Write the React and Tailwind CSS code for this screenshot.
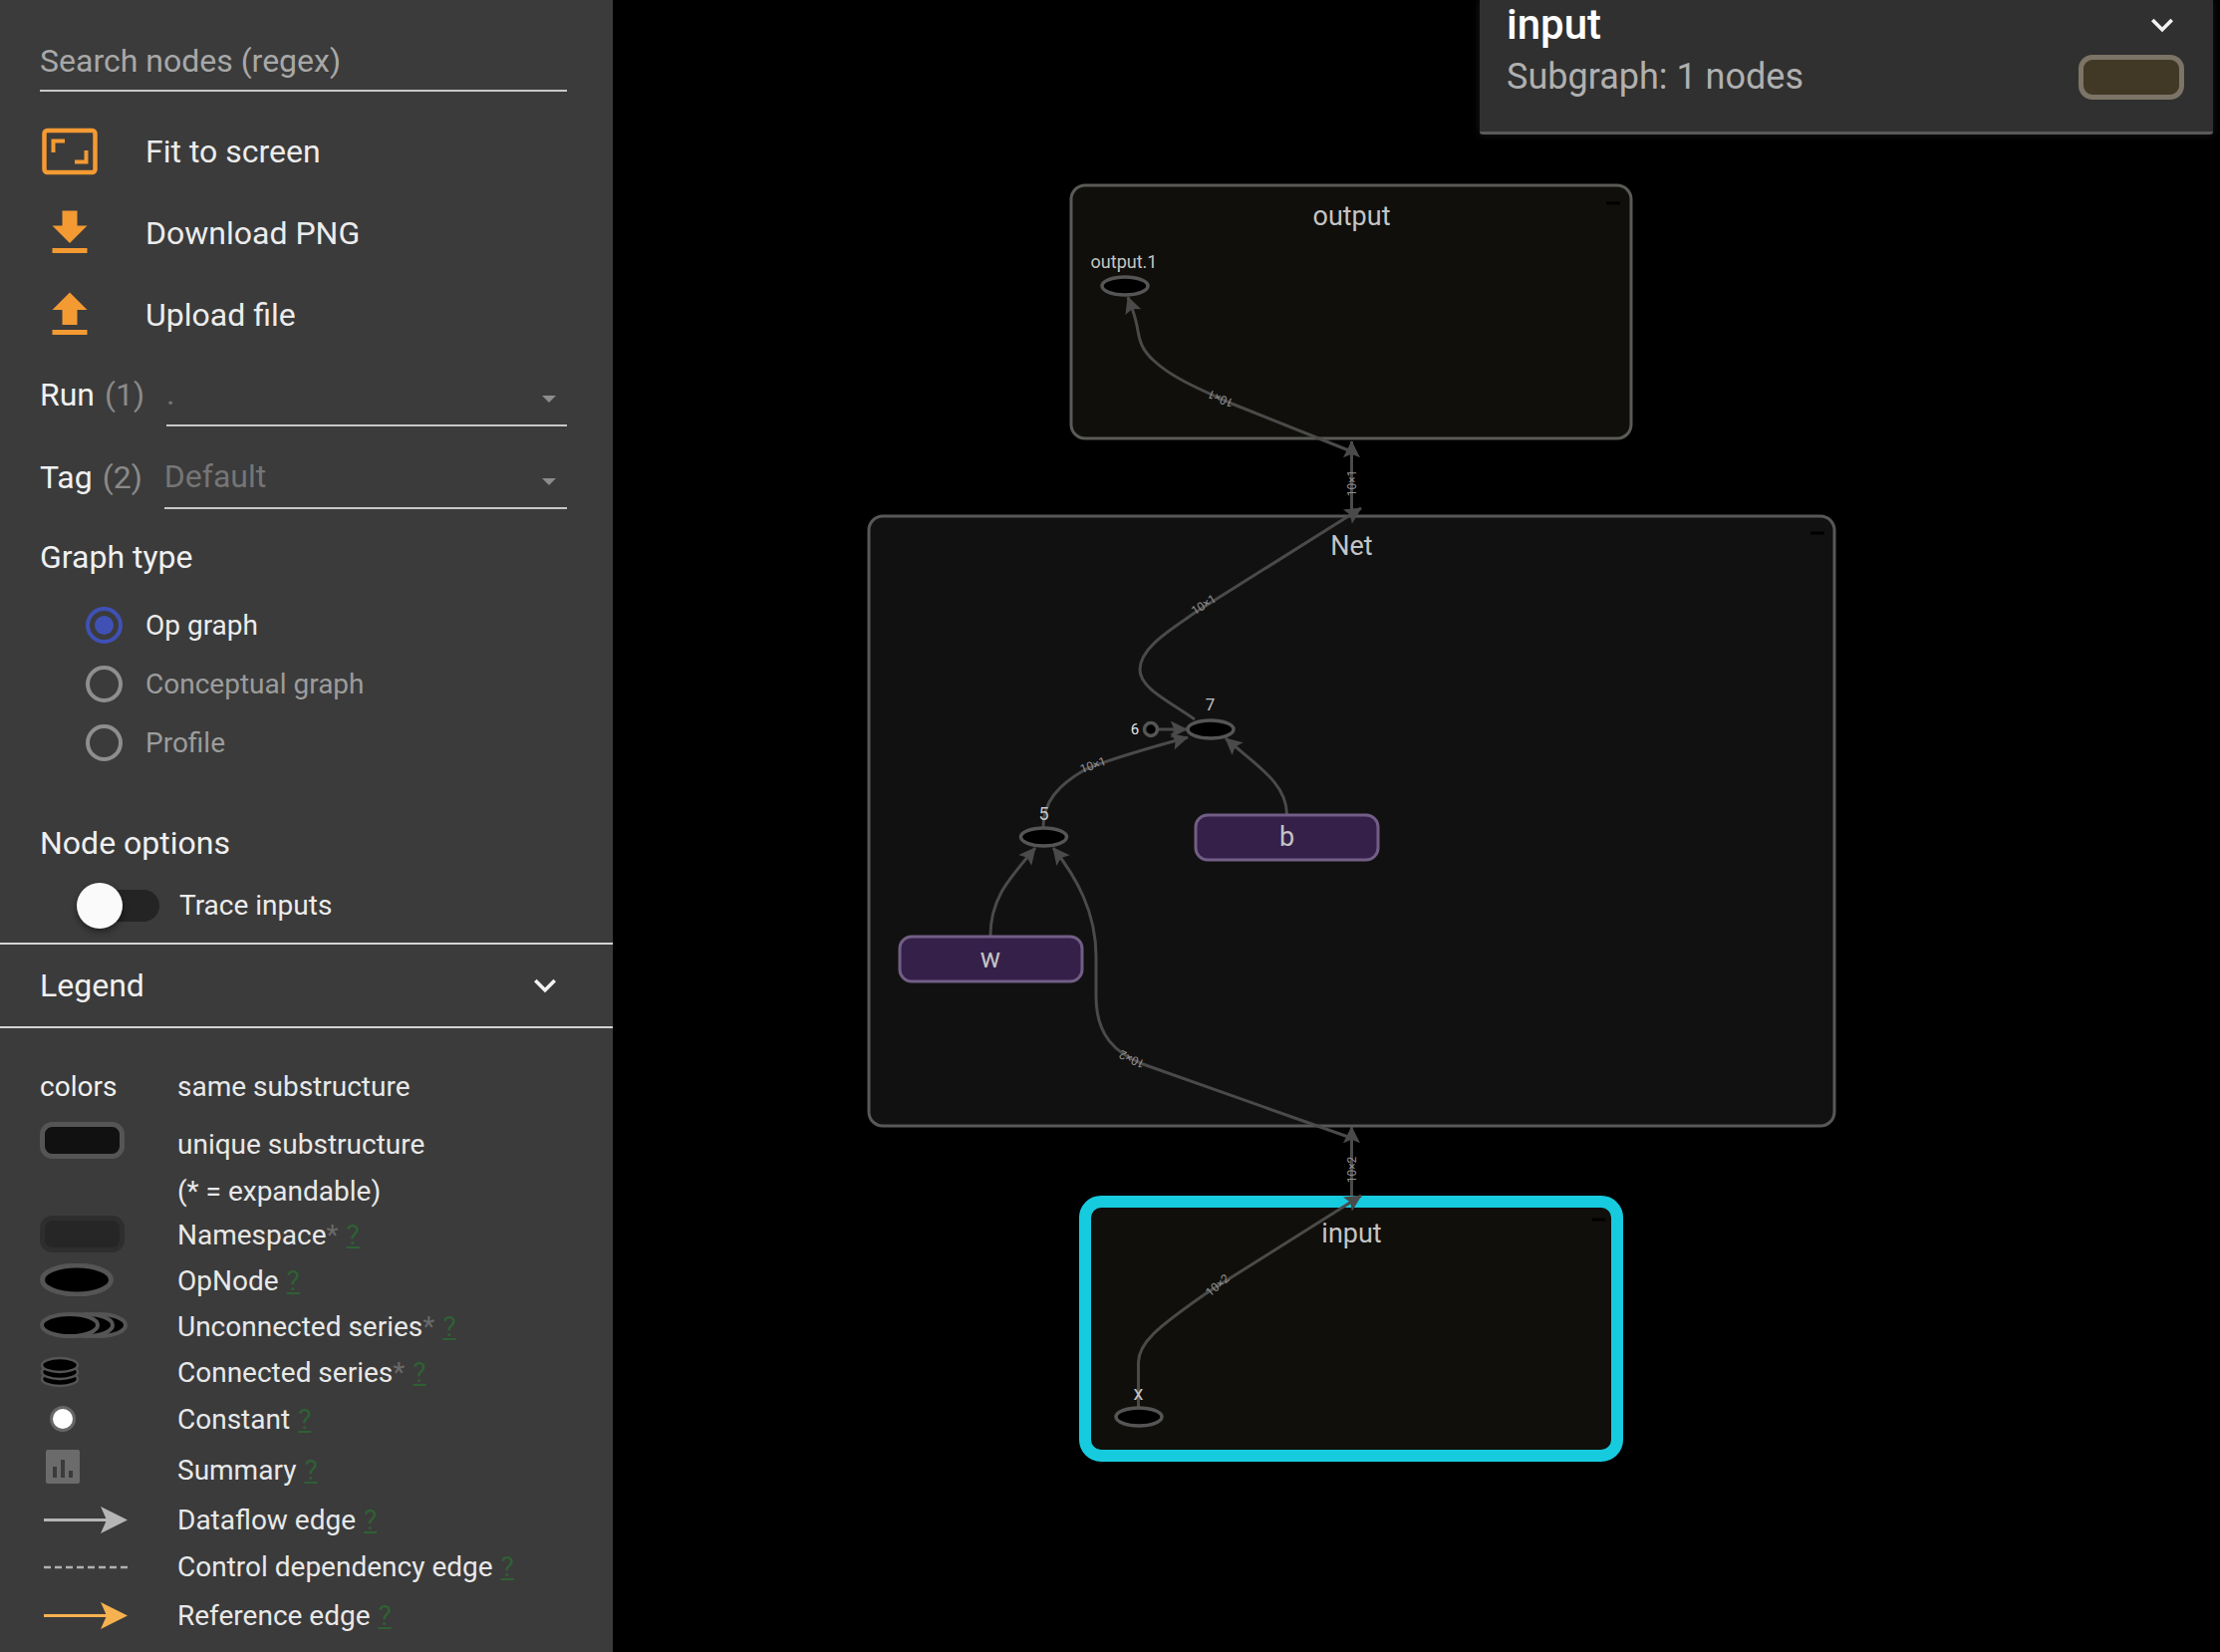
import React from 'react';

const Question = () => <span className="ml-[8px] text-[#2f6034] underline">?</span>;
const Star = () => <span className="text-[#6a6a6a]">*</span>;

const SelectArrow = () => (
  <svg width="14" height="7" viewBox="0 0 14 7" className="mr-[11px] mt-[12px]">
    <path d="M0 0h14L7 7z" fill="#8c8c8c" />
  </svg>
);

const Chevron = ({ size = 44 }) => (
  <svg width={size} height={size} viewBox="0 0 24 24" fill="#f2f2f2">
    <path d="M16.59 8.59L12 13.17 7.41 8.59 6 10l6 6 6-6z" />
  </svg>
);

const ActionRow = ({ label, children }) => (
  <div className="h-[82px] flex items-center pl-10">
    <div className="w-[60px] h-[60px] mr-[46px] flex items-center justify-center">{children}</div>
    <span className="text-[32px] text-[#ececec]">{label}</span>
  </div>
);

const SelectRow = ({ label, count, value, height }) => (
  <div className={`${height} flex items-end pl-10 pr-[46px]`}>
    <div className="h-[65px] flex items-center text-[32px] text-[#f0f0f0] whitespace-nowrap">
      {label}
      <span className="ml-[10px] text-[#8a8a8a]">({count})</span>
    </div>
    <div className="flex-1 ml-[22px] h-[65px] border-b-2 border-[#c8c8c8] flex items-center justify-between text-[32px] text-[#757575]">
      <span>{value}</span>
      <SelectArrow />
    </div>
  </div>
);

const Radio = ({ label, checked }) => (
  <div className="h-[59px] flex items-center pl-[86px]">
    <div className={`w-[37px] h-[37px] rounded-full border-4 flex items-center justify-center ${checked ? 'border-[#3f51b5]' : 'border-[#8e8e8e]'}`}>
      {checked && <div className="w-[19px] h-[19px] rounded-full bg-[#3f51b5]" />}
    </div>
    <span className={`ml-[23px] text-[28px] ${checked ? 'text-[#ececec]' : 'text-[#9c9c9c]'}`}>{label}</span>
  </div>
);

const legendRows = [
  { h: 'h-[60px]', text: 'same substructure', lead: <span className="text-[#f0f0f0]">colors</span> },
  {
    h: 'h-[56px]',
    text: 'unique substructure',
    lead: (
      <svg width="85" height="37" className="mb-[10px]">
        <rect x="2.5" y="2.5" width="80" height="32" rx="10" fill="#111111" stroke="#555555" strokeWidth="5" />
      </svg>
    ),
  },
  { h: 'h-[38px]', text: '(* = expandable)' },
  {
    h: 'h-[50px]',
    text: 'Namespace',
    star: true,
    help: true,
    lead: (
      <svg width="85" height="37" className="mb-[4px]">
        <rect x="2.5" y="2.5" width="80" height="32" rx="10" fill="#262626" stroke="#2e2e2e" strokeWidth="5" />
      </svg>
    ),
  },
  {
    h: 'h-[42px]',
    text: 'OpNode',
    help: true,
    lead: (
      <svg width="74" height="33" className="mb-[4px]">
        <ellipse cx="37" cy="16.5" rx="34.5" ry="14.5" fill="#000" stroke="#555555" strokeWidth="5" />
      </svg>
    ),
  },
  {
    h: 'h-[50px]',
    text: 'Unconnected series',
    star: true,
    help: true,
    lead: (
      <svg width="88" height="26" className="mb-[4px]">
        <ellipse cx="60" cy="13" rx="26" ry="11" fill="#000" stroke="#555555" strokeWidth="4" />
        <ellipse cx="47" cy="13" rx="26" ry="11" fill="#000" stroke="#555555" strokeWidth="4" />
        <ellipse cx="30" cy="13" rx="28" ry="11" fill="#000" stroke="#555555" strokeWidth="4" />
      </svg>
    ),
  },
  {
    h: 'h-[42px]',
    text: 'Connected series',
    star: true,
    help: true,
    lead: (
      <svg width="40" height="32" className="mb-[2px]">
        <ellipse cx="20" cy="23" rx="18" ry="7" fill="#000" stroke="#555555" strokeWidth="2.5" />
        <ellipse cx="20" cy="16" rx="18" ry="7" fill="#000" stroke="#555555" strokeWidth="2.5" />
        <ellipse cx="20" cy="9" rx="18" ry="7" fill="#000" stroke="#555555" strokeWidth="2.5" />
      </svg>
    ),
  },
  {
    h: 'h-[52px]',
    text: 'Constant',
    help: true,
    lead: (
      <svg width="26" height="26" className="ml-[10px] mb-[2px]">
        <circle cx="13" cy="13" r="11.5" fill="#fff" stroke="#666666" strokeWidth="3" />
      </svg>
    ),
  },
  {
    h: 'h-[49px]',
    text: 'Summary',
    help: true,
    lead: (
      <svg width="34" height="34" className="ml-[6px] mb-[8px]">
        <rect width="34" height="34" rx="2" fill="#6b6b6b" />
        <path d="M7 17h4v11H7zM15 10h4v18h-4zM23 21h4v7h-4z" fill="#3b3b3b" />
      </svg>
    ),
  },
  {
    h: 'h-[51px]',
    text: 'Dataflow edge',
    help: true,
    lead: (
      <svg width="84" height="27" className="ml-[4px]">
        <path d="M0 12h64v3H0z" fill="#b5b5b5" />
        <path d="M57 0l27 13.5L57 27l6-13.5z" fill="#b5b5b5" />
      </svg>
    ),
  },
  {
    h: 'h-[44px]',
    text: 'Control dependency edge',
    help: true,
    lead: (
      <svg width="84" height="4" className="ml-[4px]">
        <line x1="0" y1="2" x2="84" y2="2" stroke="#b0b0b0" strokeWidth="2.5" strokeDasharray="7 4" />
      </svg>
    ),
  },
  {
    h: 'h-[53px]',
    text: 'Reference edge',
    help: true,
    lead: (
      <svg width="84" height="27" className="ml-[4px]">
        <path d="M0 12h64v3H0z" fill="#f6b250" />
        <path d="M57 0l27 13.5L57 27l6-13.5z" fill="#f6b250" />
      </svg>
    ),
  },
];

const Sidebar = () => (
  <aside className="w-[615px] h-full shrink-0 bg-[#3b3b3b] flex flex-col">
    <div className="mx-10 w-[529px] h-[92px] border-b-2 border-[#c8c8c8] flex items-end pb-[5px] text-[32px] text-[#a8a8a8]">
      Search nodes (regex)
    </div>
    <div className="mt-[19px]">
      <ActionRow label="Fit to screen">
        <svg width="60" height="60" viewBox="0 0 60 60" fill="none" stroke="#f49a33">
          <rect x="4.5" y="9" width="51" height="42" rx="3" strokeWidth="4.5" />
          <path d="M25 19.5H13.5V31M35 40.5h11.5V29" strokeWidth="4" />
        </svg>
      </ActionRow>
      <ActionRow label="Download PNG">
        <svg width="60" height="60" viewBox="0 0 24 24" fill="#f49a33">
          <path d="M19 9h-4V3H9v6H5l7 7 7-7zM5 18v2h14v-2H5z" />
        </svg>
      </ActionRow>
      <ActionRow label="Upload file">
        <svg width="60" height="60" viewBox="0 0 24 24" fill="#f49a33">
          <path d="M9 16h6v-6h4l-7-7-7 7h4zm-4 2h14v2H5z" />
        </svg>
      </ActionRow>
    </div>
    <SelectRow label="Run" count="1" value="." height="h-[71px]" />
    <SelectRow label="Tag" count="2" value="Default" height="h-[83px]" />

    <div className="mt-[28px] h-[40px] pl-10 flex items-center text-[32px] text-[#f0f0f0]">Graph type</div>
    <div className="mt-[19px]">
      <Radio label="Op graph" checked />
      <Radio label="Conceptual graph" />
      <Radio label="Profile" />
    </div>

    <div className="mt-[51px] h-[40px] pl-10 flex items-center text-[32px] text-[#f0f0f0]">Node options</div>
    <div className="h-[80px] flex items-center pl-[77px] pt-[5px]">
      <div className="relative w-[83px] h-[32px] flex justify-end">
        <div className="w-[75px] h-[32px] rounded-full bg-[#242424]" />
        <div className="absolute left-0 top-[-7px] w-[46px] h-[46px] rounded-full bg-[#fafafa] shadow-[0_3px_6px_rgba(0,0,0,0.45)]" />
      </div>
      <span className="ml-[20px] text-[28px] text-[#ececec]">Trace inputs</span>
    </div>

    <div className="h-[86px] border-y-2 border-[#d4d4d4] flex items-center justify-between pl-10 pr-[46px] text-[32px] text-[#f0f0f0]">
      Legend
      <Chevron />
    </div>

    <div className="mt-[29px] pl-10 text-[28px] text-[#e8e8e8]">
      {legendRows.map((row) => (
        <div key={row.text} className={`${row.h} flex items-center`}>
          <div className="w-[138px] flex items-center">{row.lead}</div>
          <span>
            {row.text}
            {row.star && <Star />}
            {row.help && <Question />}
          </span>
        </div>
      ))}
    </div>
  </aside>
);

const Edge = ({ d }) => <path d={d} fill="none" stroke="#4a4a4a" strokeWidth="3" markerEnd="url(#edge-arrow)" />;

const EdgeLabel = ({ x, y, angle, children }) => (
  <text x={x} y={y} transform={`rotate(${angle} ${x} ${y})`} textAnchor="middle" dominantBaseline="central" fontSize="12" fill="#8e8e8e">
    {children}
  </text>
);

const NodeLabel = ({ x, y, size = 27, fill = '#c4c4c4', children }) => (
  <text x={x} y={y} textAnchor="middle" dominantBaseline="central" fontSize={size} fill={fill}>
    {children}
  </text>
);

const OpEllipse = ({ cx, cy }) => <ellipse cx={cx} cy={cy} rx="23" ry="9" fill="#000" stroke="#555555" strokeWidth="3.5" />;

const Graph = () => (
  <svg width="1613" height="1658" viewBox="615 0 1613 1658" className="block shrink-0">
    <defs>
      <marker id="edge-arrow" viewBox="0 0 10 10" refX="9.5" refY="5" markerWidth="18" markerHeight="17" markerUnits="userSpaceOnUse" orient="auto">
        <path d="M0 0L10 5L0 10L2 5z" fill="#4a4a4a" />
      </marker>
    </defs>

    {/* output */}
    <rect x="1075" y="186" width="562" height="254" rx="14" fill="#100f0b" stroke="#5a5a56" strokeWidth="3" />
    <NodeLabel x="1356.5" y="217">output</NodeLabel>
    <path d="M1612 204h14" stroke="#000" strokeWidth="3" />
    <NodeLabel x="1128" y="262" size="18">output.1</NodeLabel>
    <OpEllipse cx="1129" cy="287" />
    <Edge d="M1356 453L1236 405C1200 389 1175 378 1158 362C1147 352 1144 344 1142 332C1140 318 1137 312 1132 298" />
    <EdgeLabel x="1225" y="400" angle="203">10×1</EdgeLabel>

    {/* Net */}
    <rect x="872" y="518" width="969" height="612" rx="14" fill="#111111" stroke="#585858" strokeWidth="3" />
    <NodeLabel x="1356.5" y="548">Net</NodeLabel>
    <path d="M1817 535h14" stroke="#000" strokeWidth="3" />

    <Edge d="M1199 722C1170 702 1144 690 1144 672C1144 650 1175 632 1199 615L1366 510" />
    <EdgeLabel x="1208" y="607" angle="-33">10×1</EdgeLabel>

    <Edge d="M1162 732H1191" />
    <circle cx="1155" cy="732" r="6.5" fill="#000" stroke="#555555" strokeWidth="3.5" />
    <NodeLabel x="1139" y="732" size="15" fill="#e6e6e6">6</NodeLabel>

    <Edge d="M1047 830C1047 805 1062 788 1088 773C1105 765 1130 757 1192 740" />
    <EdgeLabel x="1097" y="768" angle="-20">10×1</EdgeLabel>
    <Edge d="M1291.5 817C1291 786 1262 769 1230 741" />
    <Edge d="M994 939C994 900 1015 880 1039 851" />
    <Edge d="M1356 1142L1147 1068C1120 1057 1100 1040 1100 1000V960C1100 915 1080 880 1057 851" />
    <EdgeLabel x="1136" y="1063" angle="205">10×2</EdgeLabel>

    <OpEllipse cx="1215" cy="732" />
    <NodeLabel x="1214.5" y="707" size="17">7</NodeLabel>
    <OpEllipse cx="1047.5" cy="840" />
    <NodeLabel x="1047.5" y="816" size="18">5</NodeLabel>

    <rect x="1200" y="818" width="183" height="45" rx="12" fill="#35204a" stroke="#725e85" strokeWidth="3" />
    <NodeLabel x="1291.5" y="840">b</NodeLabel>
    <rect x="903" y="940" width="183" height="45" rx="12" fill="#35204a" stroke="#725e85" strokeWidth="3" />
    <NodeLabel x="994" y="962">w</NodeLabel>

    {/* edges between groups */}
    <Edge d="M1356.5 517V443" />
    <EdgeLabel x="1356.5" y="485" angle="-90">10×1</EdgeLabel>
    <Edge d="M1356.5 1202V1131" />
    <EdgeLabel x="1356.5" y="1174" angle="-90">10×2</EdgeLabel>

    {/* input */}
    <rect x="1089" y="1206" width="534" height="255" rx="16" fill="#100f0b" stroke="#17cbdf" strokeWidth="12" />
    <NodeLabel x="1356.5" y="1238">input</NodeLabel>
    <path d="M1598 1224h13" stroke="#000" strokeWidth="3" />
    <Edge d="M1142.5 1413V1367C1143 1348 1160 1333 1212 1297L1366 1200" />
    <EdgeLabel x="1222" y="1290" angle="-40">10×2</EdgeLabel>
    <NodeLabel x="1142.5" y="1398" size="20">x</NodeLabel>
    <OpEllipse cx="1143" cy="1422" />
  </svg>
);

const InfoCard = () => (
  <div className="absolute left-[1485px] top-0 w-[736px] h-[135px] bg-[#303030] border-b-[3px] border-[#5a5a5a] rounded-b-[3px] shadow-[0_0_8px_rgba(255,255,255,0.1)] pl-[27px] pr-[29px]">
    <div className="h-[49px] flex items-center justify-between">
      <span className="text-[42px] font-medium text-white">input</span>
      <Chevron />
    </div>
    <div className="h-[56px] flex items-center justify-between">
      <span className="text-[36px] text-[#b0b0b0]">Subgraph: 1 nodes</span>
      <div className="w-[106px] h-[45px] rounded-[14px] bg-[#413825] border-[5px] border-[#7c7466]" />
    </div>
  </div>
);

export default function App() {
  return (
    <div className="relative w-[2228px] h-[1658px] bg-black flex overflow-hidden font-[Roboto,sans-serif]">
      <Sidebar />
      <Graph />
      <InfoCard />
    </div>
  );
}
